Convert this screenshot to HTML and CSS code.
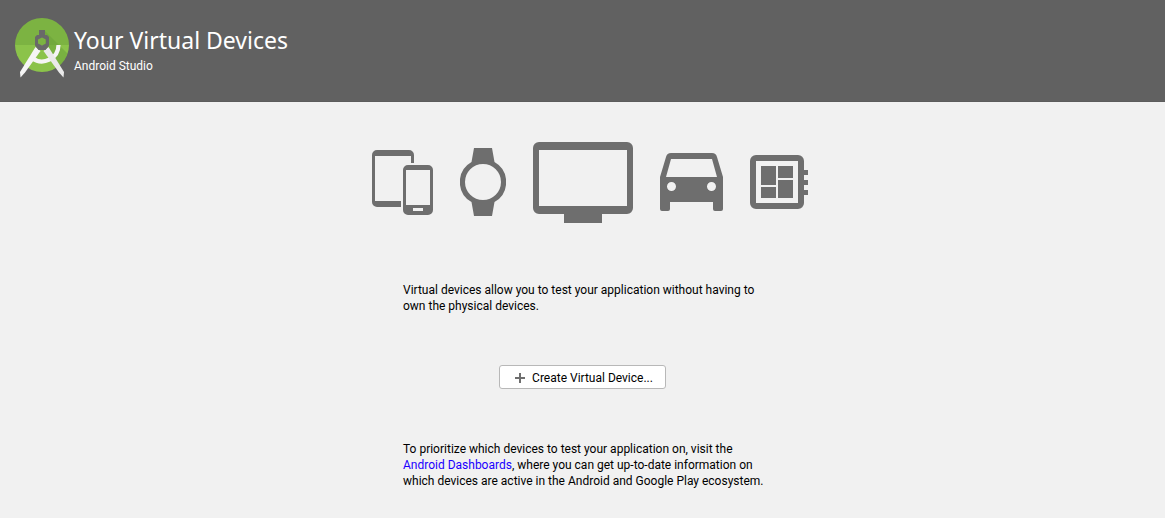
FILE: index.html
```html
<!DOCTYPE html>
<html lang="en">
<head>
<meta charset="utf-8">
<title>Your Virtual Devices</title>
<link rel="stylesheet" href="styles.css">
</head>
<body>
<header class="banner">
  <svg class="logo" width="56" height="62" viewBox="14 17 56 62" aria-hidden="true">
    <defs>
      <clipPath id="disc"><circle cx="42" cy="45" r="27"/></clipPath>
    </defs>
    <g clip-path="url(#disc)">
      <path fill="#7cb342" d="M14 17h56v28H14z"/>
      <path fill="#8bc34a" d="M14 45h56v28H14z"/>
      <path fill="#689f38" opacity=".5" d="M45 31l24 24-10 18-10-16-4-6z"/>
    </g>
    <path fill="none" stroke="#f5f5f5" stroke-width="4.200" d="M58.500 45A16.500 16.500 0 0 1 32 58"/>
    <path fill="#f5f5f5" d="M35.500 47l5 4L25 72.500l-4.500 5-.500-5.500z"/>
    <path fill="#eaeaea" d="M48.500 47l-5 4L59 72.500l4.500 5 .500-5.500z"/>
    <path fill="#696969" fill-rule="evenodd" d="M39 30h6v5h2l2 2v8.500L45.500 50h-7L35 45.500V37l2-2h2zM42 37.500l-4 2v4l4 2 4-2v-4z"/>
  </svg>
  <div class="heading">
    <h1 class="title">Your Virtual Devices</h1>
    <p class="product">Android Studio</p>
  </div>
</header>
<main class="content">
  <div class="devices" aria-hidden="true">
    <svg width="61" height="65" viewBox="0 0 61 65">
      <path d="M5 0h32a5 5 0 0 1 5 5v8h-3V6H3v45h26v6H5a5 5 0 0 1-5-5V5a5 5 0 0 1 5-5z"/>
      <path fill-rule="evenodd" d="M36 15h20a5 5 0 0 1 5 5v40a5 5 0 0 1-5 5H36a5 5 0 0 1-5-5V20a5 5 0 0 1 5-5zM34 20v35h24V20zM41 58v3h10v-3z"/>
    </svg>
    <svg width="46" height="69" viewBox="0 0 46 69">
      <path fill-rule="evenodd" d="M14 0h18l2.500 14a23 23 0 0 1 0 40L32 68H14l-2.500-14a23 23 0 0 1 0-40zM23 16a18 18 0 1 0 0 36 18 18 0 0 0 0-36z"/>
    </svg>
    <svg width="100" height="81" viewBox="0 0 100 81">
      <path fill-rule="evenodd" d="M6 0h88a6 6 0 0 1 6 6v60a6 6 0 0 1-6 6H69v9H31v-9H6a6 6 0 0 1-6-6V6a6 6 0 0 1 6-6zM6 8v56h88V8z"/>
    </svg>
    <svg width="63" height="59" viewBox="0 0 63 59">
      <path fill-rule="evenodd" d="M11 0h41q4 0 5 4l6 20v32q0 2-2 2h-6q-2 0-2-2v-7H10v7q0 2-2 2H2q-2 0-2-2V24L6 4q1-4 5-4zM11 6L6 24h51L52 6zM11.500 29a4.500 4.500 0 1 0 0 9 4.500 4.500 0 0 0 0-9zM51.500 29a4.500 4.500 0 1 0 0 9 4.500 4.500 0 0 0 0-9z"/>
    </svg>
    <svg width="58" height="55" viewBox="0 0 58 55">
      <path fill-rule="evenodd" d="M6 0h42a6 6 0 0 1 6 6v9h4v5h-4v5h4v5h-4v5h4v5h-4v8a6 6 0 0 1-6 6H6a6 6 0 0 1-6-6V6a6 6 0 0 1 6-6zM6 6v42h42V6z"/>
      <path d="M11 11h15v19H11zM28 11h15v12H28zM11 32h15v11H11zM28 25h15v18H28z"/>
    </svg>
  </div>
  <p class="text">Virtual devices allow you to test your application without having to own the physical devices.</p>
  <button class="create" type="button">
    <svg width="10" height="10" viewBox="0 0 10 10" aria-hidden="true"><path d="M4 0h2v4h4v2H6v4H4V6H0V4h4z"/></svg>
    Create Virtual Device...
  </button>
  <p class="text">To prioritize which devices to test your application on, visit the <a class="link" href="#dashboards">Android Dashboards</a>, where you can get up-to-date information on which devices are active in the Android and Google Play ecosystem.</p>
</main>
</body>
</html>
```
FILE: styles.css
```css
body {
  margin: 0;
  background: #f1f1f1;
  color: #000;
  font: 12px/16px Roboto, "Open Sans", sans-serif;
}

.banner {
  display: flex;
  align-items: flex-start;
  gap: 4px;
  box-sizing: border-box;
  min-height: 102px;
  padding: 17px 14px;
  background: #616161;
  border-bottom: 1px solid #5c5c5c;
  color: #fff;
}

.logo {
  flex: none;
}

.heading {
  padding-top: 7px;
}

.title {
  margin: 0 0 2px;
  font-family: "Noto Sans", "Open Sans", sans-serif;
  font-size: 23px;
  line-height: 32px;
  font-weight: 400;
}

.product {
  margin: 0;
}

.content {
  display: flex;
  flex-direction: column;
  align-items: center;
  padding: 40px 16px 28px;
}

.devices {
  display: flex;
  align-items: center;
  gap: 27px;
  margin-bottom: 59px;
  padding-left: 15px;
  fill: #6e6e6e;
}

.text {
  box-sizing: border-box;
  width: 100%;
  max-width: 367px;
  margin: 0;
  padding-left: 4px;
}

.create {
  display: flex;
  align-items: center;
  gap: 7px;
  height: 24px;
  margin: 51px 0 52px;
  padding: 1px 12px 0 15px;
  border: 1px solid #b8b8b8;
  border-radius: 3px;
  background: #fff;
  color: #000;
  font: inherit;
}

.create svg {
  fill: #6e6e6e;
}

.link {
  color: #1a00ff;
  text-decoration: none;
}
```
